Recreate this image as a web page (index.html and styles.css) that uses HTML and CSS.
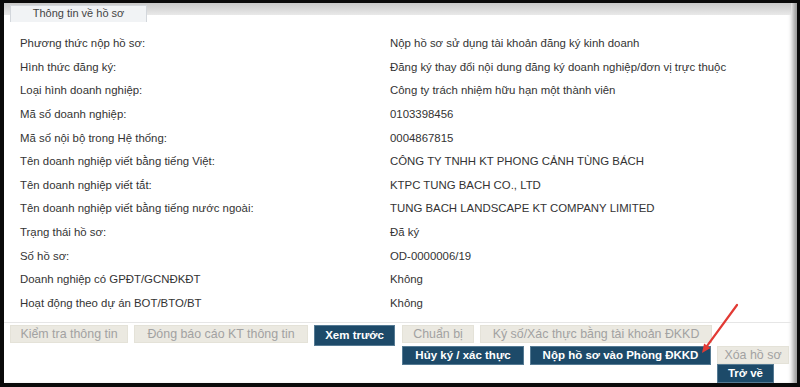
FILE: index.html
```html
<!DOCTYPE html>
<html lang="vi">
<head>
    <meta charset="UTF-8">
    <title>Thông tin về hồ sơ</title>
    <link rel="stylesheet" href="styles.css">
</head>
<body>
    <div class="frame">
        <div class="tabbar">
            <div class="tab">Thông tin về hồ sơ</div>
        </div>

        <div class="info">
            <div class="row"><span class="label">Phương thức nộp hồ sơ:</span><span class="value">Nộp hồ sơ sử dụng tài khoản đăng ký kinh doanh</span></div>
            <div class="row"><span class="label">Hình thức đăng ký:</span><span class="value">Đăng ký thay đổi nội dung đăng ký doanh nghiệp/đơn vị trực thuộc</span></div>
            <div class="row"><span class="label">Loại hình doanh nghiệp:</span><span class="value">Công ty trách nhiệm hữu hạn một thành viên</span></div>
            <div class="row"><span class="label">Mã số doanh nghiệp:</span><span class="value">0103398456</span></div>
            <div class="row"><span class="label">Mã số nội bộ trong Hệ thống:</span><span class="value">0004867815</span></div>
            <div class="row"><span class="label">Tên doanh nghiệp viết bằng tiếng Việt:</span><span class="value">CÔNG TY TNHH KT PHONG CẢNH TÙNG BÁCH</span></div>
            <div class="row"><span class="label">Tên doanh nghiệp viết tắt:</span><span class="value">KTPC TUNG BACH CO., LTD</span></div>
            <div class="row"><span class="label">Tên doanh nghiệp viết bằng tiếng nước ngoài:</span><span class="value">TUNG BACH LANDSCAPE KT COMPANY LIMITED</span></div>
            <div class="row"><span class="label">Trạng thái hồ sơ:</span><span class="value">Đã ký</span></div>
            <div class="row"><span class="label">Số hồ sơ:</span><span class="value">OD-0000006/19</span></div>
            <div class="row"><span class="label">Doanh nghiệp có GPĐT/GCNĐKĐT</span><span class="value">Không</span></div>
            <div class="row"><span class="label">Hoạt động theo dự án BOT/BTO/BT</span><span class="value">Không</span></div>
        </div>

        <div class="actions">
            <div class="btn-group">
                <span class="btn btn-check">Kiểm tra thông tin</span>
                <span class="btn btn-report">Đóng báo cáo KT thông tin</span>
                <span class="btn btn-dark btn-preview">Xem trước</span>
            </div>
            <div class="btn-stack">
                <div class="btn-group">
                    <span class="btn btn-prepare">Chuẩn bị</span>
                    <span class="btn btn-sign">Ký số/Xác thực bằng tài khoản ĐKKD</span>
                </div>
                <div class="btn-group">
                    <span class="btn btn-dark btn-unsign">Hủy ký / xác thực</span>
                    <span class="btn btn-dark btn-submit">Nộp hồ sơ vào Phòng ĐKKD</span>
                    <div class="btn-col">
                        <span class="btn btn-delete">Xóa hồ sơ</span>
                        <span class="btn btn-dark btn-back">Trở về</span>
                    </div>
                </div>
            </div>
        </div>

        <!-- red annotation arrow -->
        <svg class="arrow" width="50" height="60" viewBox="0 0 50 60">
            <line x1="41" y1="5" x2="11.3" y2="45.7" stroke="#e23a34" stroke-width="2.2" stroke-linecap="round"/>
            <polygon points="6,53 14.5,48 8.1,43.4" fill="#e23a34"/>
        </svg>
    </div>
</body>
</html>
```

FILE: styles.css
```css
html, body {
    margin: 0;
    padding: 0;
    background: #000;
}
.frame {
    position: relative;
    box-sizing: border-box;
    width: 800px;
    height: 387px;
    background: #fff;
    border-top: 3px solid #0a0a0a;
    border-left: 4px solid #0a0a0a;
    border-bottom: 4px solid #0a0a0a;
    border-right: 3px solid #0a0a0a;
    box-shadow: inset -7px 0 5px -3px #9a9a9a;
    font-family: "Liberation Sans", Arial, sans-serif;
    color: #333;
    overflow: hidden;
}
.tabbar {
    display: flex;
    align-items: flex-start;
    height: 12px;
    padding-left: 6px;
    margin-right: 6px;
    background: linear-gradient(#c9c9c9, #e9e9e9);
}
.tab {
    box-sizing: border-box;
    width: 137px;
    height: 17px;
    margin-top: 2px;
    background: #f1f3f5;
    border: 1px solid #d3d7dc;
    border-bottom: none;
    font-size: 11px;
    line-height: 15px;
    text-align: center;
    color: #444;
}
.info {
    padding-top: 17px;
}
.row {
    display: flex;
    height: 23.65px;
    line-height: 23.65px;
    padding-left: 16px;
    font-size: 11.4px;
}
.label {
    width: 370px;
    flex-shrink: 0;
}
.value {
    white-space: nowrap;
}
.actions {
    display: flex;
    align-items: flex-start;
    gap: 7px;
    margin-top: 6px;
    margin-right: 6px;
    padding: 2px 0 0 6px;
    border-top: 1px solid #e6e6e6;
}
.btn-group {
    display: flex;
    align-items: flex-start;
    gap: 6px;
}
.btn-stack {
    display: flex;
    flex-direction: column;
    gap: 3px;
}
.btn-col {
    display: flex;
    flex-direction: column;
    align-items: flex-start;
}
.btn {
    box-sizing: border-box;
    height: 18px;
    padding: 0 4px;
    border: 1px solid #e4e2d8;
    background: #ebe9e1;
    color: #a2a2a2;
    font-size: 12.4px;
    line-height: 16px;
    text-align: center;
    white-space: nowrap;
}
.btn-dark {
    height: 19px;
    background: #1d4a69;
    border-color: #557a93;
    color: #fff;
    font-size: 11.5px;
    font-weight: bold;
    line-height: 17px;
}
.btn-check { width: 118px; }
.btn-report { width: 174px; }
.btn-preview { width: 81px; height: 21px; line-height: 19px; }
.btn-prepare { width: 72px; }
.btn-sign { width: 232px; }
.btn-unsign { width: 122px; }
.btn-submit { width: 181px; }
.btn-delete { width: 72px; }
.btn-back { width: 57px; }
.arrow {
    position: absolute;
    left: 692px;
    top: 297px;
}
```
